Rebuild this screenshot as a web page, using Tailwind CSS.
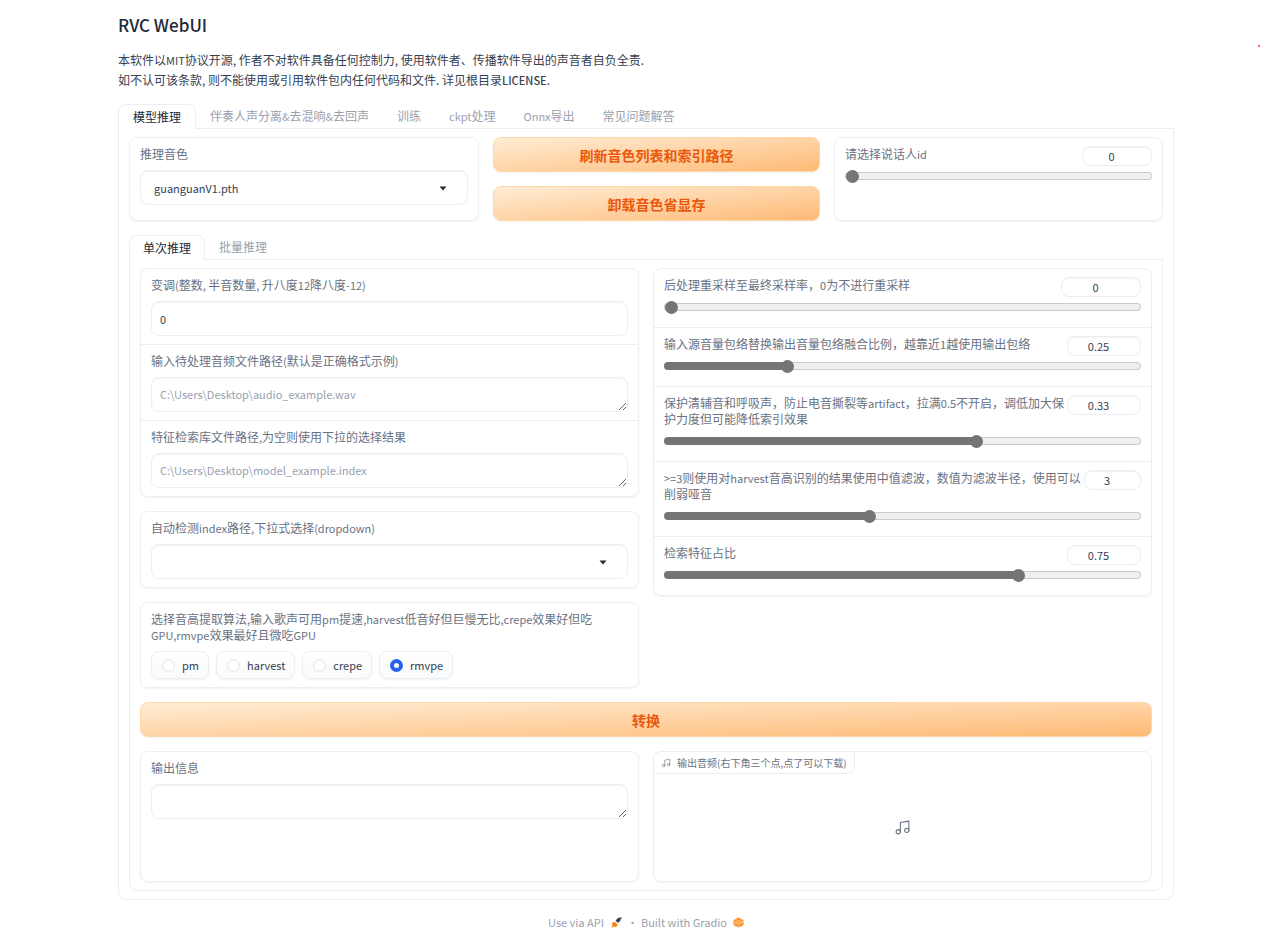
<!DOCTYPE html>
<html lang="zh-CN">

<head>
    <meta charset="UTF-8">
    <meta name="viewport" content="width=device-width, initial-scale=1.0">
    <script src="https://cdn.jsdelivr.net/npm/@tailwindcss/browser@4"></script>
    <title>RVC WebUI</title>
</head>

<body class="relative bg-white pl-[118px] pr-[106px] pt-[11px] font-['Noto_Sans_CJK_SC',sans-serif] text-xs leading-4 text-gray-700">
    <span class="absolute right-5 top-[45px] size-[2px] rounded-full bg-red-500"></span>

    <h1 class="text-[17px] font-medium leading-7 text-gray-800">RVC WebUI</h1>
    <p class="mt-[11px] leading-[19px]">
        本软件以<span class="text-[11px]">MIT</span>协议开源, 作者不对软件具备任何控制力, 使用软件者、传播软件导出的声音者自负全责.<br>
        如不认可该条款, 则不能使用或引用软件包内任何代码和文件. 详见根目录<b class="text-[11px] font-medium">LICENSE</b>.
    </p>

    <main class="mt-[14px]">
        <div class="flex border-b border-[#eceef1]" role="tablist">
            <button type="button" role="tab" aria-selected="true" class="-mb-px h-[25px] rounded-t-lg border border-b-0 border-[#eceef1] bg-white px-[14px] text-gray-800">模型推理</button>
            <button type="button" role="tab" class="h-6 px-[14px] text-gray-400">伴奏人声分离<span class="text-[11px]">&amp;</span>去混响<span class="text-[11px]">&amp;</span>去回声</button>
            <button type="button" role="tab" class="h-6 px-[14px] text-gray-400">训练</button>
            <button type="button" role="tab" class="h-6 px-[14px] text-gray-400"><span class="text-[11px]">ckpt</span>处理</button>
            <button type="button" role="tab" class="h-6 px-[14px] text-gray-400"><span class="text-[11px]">Onnx</span>导出</button>
            <button type="button" role="tab" class="h-6 px-[14px] text-gray-400">常见问题解答</button>
        </div>

        <div class="rounded-b-lg border border-t-0 border-[#eceef1] px-[10px] pb-2 pt-2">
            <!-- voice row -->
            <div class="grid grid-cols-[350fr_327fr_329fr] gap-[14px]">
                <div class="rounded-lg border border-[#eceef1] px-[10px] py-2 shadow-xs">
                    <label for="voice" class="mb-2 block text-gray-500">推理音色</label>
                    <div class="relative">
                        <select id="voice" class="block h-[35px] w-full appearance-none rounded-lg border border-[#eceef1] bg-white px-[13px] text-[11px] inset-shadow-xs">
                            <option>guanguanV1.pth</option>
                        </select>
                        <svg class="pointer-events-none absolute right-[21px] top-4 h-[5px] w-2" viewBox="0 0 8 5"><path d="M0.5 0.5h7L4 4.5z" fill="#1f2937" /></svg>
                    </div>
                </div>
                <div class="flex flex-col gap-[14px]">
                    <button type="button" class="h-[35px] rounded-lg border border-[#fed7aa] bg-linear-to-br from-[#ffedd5] to-[#fdba74] text-sm font-bold text-[#ea580c] shadow-xs">刷新音色列表和索引路径</button>
                    <button type="button" class="h-[35px] rounded-lg border border-[#fed7aa] bg-linear-to-br from-[#ffedd5] to-[#fdba74] text-sm font-bold text-[#ea580c] shadow-xs">卸载音色省显存</button>
                </div>
                <div class="rounded-lg border border-[#eceef1] px-[10px] py-2 shadow-xs">
                    <div class="flex items-start justify-between gap-[2px]">
                        <label for="speaker" class="mb-[6px] text-gray-500">请选择说话人<span class="text-[11px]">id</span></label>
                        <input type="number" aria-label="请选择说话人id" value="0" class="h-5 w-[70px] rounded-lg border border-[#eceef1] pl-3 pr-2 text-center text-[11px] inset-shadow-xs">
                    </div>
                    <input id="speaker" type="range" min="0" max="100" value="0" style="--fill:0%" class="my-1 block h-2 w-full appearance-none rounded-full border border-transparent [background:linear-gradient(to_right,#757575_var(--fill),#efefef_var(--fill))_padding-box,linear-gradient(to_right,#757575_var(--fill),#cbcbcb_var(--fill))_border-box] [&::-webkit-slider-thumb]:size-[13px] [&::-webkit-slider-thumb]:appearance-none [&::-webkit-slider-thumb]:rounded-full [&::-webkit-slider-thumb]:bg-[#757575]">
                </div>
            </div>

            <div class="mt-[14px] flex border-b border-[#eceef1]" role="tablist">
                <button type="button" role="tab" aria-selected="true" class="-mb-px h-[25px] rounded-t-lg border border-b-0 border-[#eceef1] bg-white px-[13px] text-gray-800">单次推理</button>
                <button type="button" role="tab" class="h-6 px-[14px] text-gray-400">批量推理</button>
            </div>

            <div class="rounded-b-lg border border-t-0 border-[#eceef1] px-[10px] pb-2 pt-2">
                <div class="grid grid-cols-2 items-start gap-[14px]">
                    <div class="flex flex-col gap-[14px]">
                        <div class="divide-y divide-[#eceef1] rounded-lg border border-[#eceef1] shadow-xs">
                            <div class="px-[10px] py-2">
                                <label for="pitch" class="mb-2 block text-gray-500">变调<span class="text-[11px]">(</span>整数<span class="text-[11px]">, </span>半音数量<span class="text-[11px]">, </span>升八度<span class="text-[11px]">12</span>降八度<span class="text-[11px]">-12)</span></label>
                                <input id="pitch" type="number" value="0" class="block h-[35px] w-full rounded-lg border border-[#eceef1] px-2 text-[11px] inset-shadow-xs">
                            </div>
                            <div class="px-[10px] py-2">
                                <label for="audio-path" class="mb-2 block text-gray-500">输入待处理音频文件路径<span class="text-[11px]">(</span>默认是正确格式示例<span class="text-[11px]">)</span></label>
                                <textarea id="audio-path" rows="1" placeholder="C:\Users\Desktop\audio_example.wav" class="block h-[35px] w-full resize-y rounded-lg border border-[#eceef1] px-2 py-2 text-[11px] leading-4 inset-shadow-xs placeholder:text-gray-400"></textarea>
                            </div>
                            <div class="px-[10px] py-2">
                                <label for="index-path" class="mb-2 block text-gray-500">特征检索库文件路径<span class="text-[11px]">,</span>为空则使用下拉的选择结果</label>
                                <textarea id="index-path" rows="1" placeholder="C:\Users\Desktop\model_example.index" class="block h-[35px] w-full resize-y rounded-lg border border-[#eceef1] px-2 py-2 text-[11px] leading-4 inset-shadow-xs placeholder:text-gray-400"></textarea>
                            </div>
                        </div>

                        <div class="rounded-lg border border-[#eceef1] px-[10px] py-2 shadow-xs">
                            <label for="index-select" class="mb-2 block text-gray-500">自动检测<span class="text-[11px]">index</span>路径<span class="text-[11px]">,</span>下拉式选择<span class="text-[11px]">(dropdown)</span></label>
                            <div class="relative">
                                <select id="index-select" class="block h-[35px] w-full appearance-none rounded-lg border border-[#eceef1] bg-white px-[13px] text-[11px] inset-shadow-xs">
                                    <option></option>
                                </select>
                                <svg class="pointer-events-none absolute right-[21px] top-4 h-[5px] w-2" viewBox="0 0 8 5"><path d="M0.5 0.5h7L4 4.5z" fill="#1f2937" /></svg>
                            </div>
                        </div>

                        <div role="radiogroup" aria-labelledby="f0-label" class="rounded-lg border border-[#eceef1] px-[10px] py-2 shadow-xs">
                            <div id="f0-label" class="mb-2 text-gray-500">选择音高提取算法<span class="text-[11px]">,</span>输入歌声可用<span class="text-[11px]">pm</span>提速<span class="text-[11px]">,harvest</span>低音好但巨慢无比<span class="text-[11px]">,crepe</span>效果好但吃<span class="text-[11px]">GPU,rmvpe</span>效果最好且微吃<span class="text-[11px]">GPU</span></div>
                            <div class="flex gap-[7px]">
                                <label class="flex h-7 items-center gap-[7px] rounded-lg border border-[#eceef1] bg-linear-to-t from-gray-50 to-white pl-[10px] pr-[9px] text-[11px] shadow-xs">
                                    <input type="radio" name="f0" class="size-[13px] appearance-none rounded-full border border-gray-200 bg-white inset-shadow-xs checked:border-4 checked:border-[#2563eb]">pm
                                </label>
                                <label class="flex h-7 items-center gap-[7px] rounded-lg border border-[#eceef1] bg-linear-to-t from-gray-50 to-white pl-[10px] pr-[9px] text-[11px] shadow-xs">
                                    <input type="radio" name="f0" class="size-[13px] appearance-none rounded-full border border-gray-200 bg-white inset-shadow-xs checked:border-4 checked:border-[#2563eb]">harvest
                                </label>
                                <label class="flex h-7 items-center gap-[7px] rounded-lg border border-[#eceef1] bg-linear-to-t from-gray-50 to-white pl-[10px] pr-[9px] text-[11px] shadow-xs">
                                    <input type="radio" name="f0" class="size-[13px] appearance-none rounded-full border border-gray-200 bg-white inset-shadow-xs checked:border-4 checked:border-[#2563eb]">crepe
                                </label>
                                <label class="flex h-7 items-center gap-[7px] rounded-lg border border-[#eceef1] bg-linear-to-t from-gray-50 to-white pl-[10px] pr-[9px] text-[11px] shadow-xs">
                                    <input type="radio" name="f0" checked class="size-[13px] appearance-none rounded-full border border-gray-200 bg-white inset-shadow-xs checked:border-4 checked:border-[#2563eb]">rmvpe
                                </label>
                            </div>
                        </div>
                    </div>

                    <!-- sliders -->
                    <div class="divide-y divide-[#eceef1] rounded-lg border border-[#eceef1] shadow-xs">
                        <div class="px-[10px] pb-3 pt-2">
                            <div class="flex items-start justify-between gap-[2px]">
                                <label for="resample" class="mb-[6px] text-gray-500">后处理重采样至最终采样率，<span class="text-[11px]">0</span>为不进行重采样</label>
                                <input type="number" aria-label="重采样" value="0" class="h-5 w-20 shrink-0 rounded-lg border border-[#eceef1] pl-3 pr-2 text-center text-[11px] inset-shadow-xs">
                            </div>
                            <input id="resample" type="range" min="0" max="48000" value="0" style="--fill:0%" class="my-1 block h-2 w-full appearance-none rounded-full border border-transparent [background:linear-gradient(to_right,#757575_var(--fill),#efefef_var(--fill))_padding-box,linear-gradient(to_right,#757575_var(--fill),#cbcbcb_var(--fill))_border-box] [&::-webkit-slider-thumb]:size-[13px] [&::-webkit-slider-thumb]:appearance-none [&::-webkit-slider-thumb]:rounded-full [&::-webkit-slider-thumb]:bg-[#757575]">
                        </div>
                        <div class="px-[10px] pb-3 pt-2">
                            <div class="flex items-start justify-between gap-[2px]">
                                <label for="rms" class="mb-[6px] text-gray-500">输入源音量包络替换输出音量包络融合比例，越靠近<span class="text-[11px]">1</span>越使用输出包络</label>
                                <input type="number" aria-label="融合比例" value="0.25" step="0.01" class="h-5 w-[74px] shrink-0 rounded-lg border border-[#eceef1] pl-3 pr-2 text-center text-[11px] inset-shadow-xs">
                            </div>
                            <input id="rms" type="range" min="0" max="1" step="0.01" value="0.25" style="--fill:25%" class="my-1 block h-2 w-full appearance-none rounded-full border border-transparent [background:linear-gradient(to_right,#757575_var(--fill),#efefef_var(--fill))_padding-box,linear-gradient(to_right,#757575_var(--fill),#cbcbcb_var(--fill))_border-box] [&::-webkit-slider-thumb]:size-[13px] [&::-webkit-slider-thumb]:appearance-none [&::-webkit-slider-thumb]:rounded-full [&::-webkit-slider-thumb]:bg-[#757575]">
                        </div>
                        <div class="px-[10px] pb-3 pt-2">
                            <div class="flex items-start justify-between gap-[2px]">
                                <label for="protect" class="mb-[6px] text-gray-500">保护清辅音和呼吸声，防止电音撕裂等<span class="text-[11px]">artifact</span>，拉满<span class="text-[11px]">0.5</span>不开启，调低加大保护力度但可能降低索引效果</label>
                                <input type="number" aria-label="保护" value="0.33" step="0.01" class="h-5 w-[74px] shrink-0 rounded-lg border border-[#eceef1] pl-3 pr-2 text-center text-[11px] inset-shadow-xs">
                            </div>
                            <input id="protect" type="range" min="0" max="0.5" step="0.01" value="0.33" style="--fill:66%" class="my-1 block h-2 w-full appearance-none rounded-full border border-transparent [background:linear-gradient(to_right,#757575_var(--fill),#efefef_var(--fill))_padding-box,linear-gradient(to_right,#757575_var(--fill),#cbcbcb_var(--fill))_border-box] [&::-webkit-slider-thumb]:size-[13px] [&::-webkit-slider-thumb]:appearance-none [&::-webkit-slider-thumb]:rounded-full [&::-webkit-slider-thumb]:bg-[#757575]">
                        </div>
                        <div class="px-[10px] pb-3 pt-2">
                            <div class="flex items-start justify-between gap-[2px]">
                                <label for="filter" class="mb-[6px] text-gray-500"><span class="text-[11px]">&gt;=3</span>则使用对<span class="text-[11px]">harvest</span>音高识别的结果使用中值滤波，数值为滤波半径，使用可以削弱哑音</label>
                                <input type="number" aria-label="滤波半径" value="3" class="h-5 w-[57px] shrink-0 rounded-lg border border-[#eceef1] pl-3 pr-2 text-center text-[11px] inset-shadow-xs">
                            </div>
                            <input id="filter" type="range" min="0" max="7" value="3" style="--fill:43%" class="my-1 block h-2 w-full appearance-none rounded-full border border-transparent [background:linear-gradient(to_right,#757575_var(--fill),#efefef_var(--fill))_padding-box,linear-gradient(to_right,#757575_var(--fill),#cbcbcb_var(--fill))_border-box] [&::-webkit-slider-thumb]:size-[13px] [&::-webkit-slider-thumb]:appearance-none [&::-webkit-slider-thumb]:rounded-full [&::-webkit-slider-thumb]:bg-[#757575]">
                        </div>
                        <div class="px-[10px] pb-3 pt-2">
                            <div class="flex items-start justify-between gap-[2px]">
                                <label for="index-rate" class="mb-[6px] text-gray-500">检索特征占比</label>
                                <input type="number" aria-label="检索特征占比" value="0.75" step="0.01" class="h-5 w-[74px] shrink-0 rounded-lg border border-[#eceef1] pl-3 pr-2 text-center text-[11px] inset-shadow-xs">
                            </div>
                            <input id="index-rate" type="range" min="0" max="1" step="0.01" value="0.75" style="--fill:75%" class="my-1 block h-2 w-full appearance-none rounded-full border border-transparent [background:linear-gradient(to_right,#757575_var(--fill),#efefef_var(--fill))_padding-box,linear-gradient(to_right,#757575_var(--fill),#cbcbcb_var(--fill))_border-box] [&::-webkit-slider-thumb]:size-[13px] [&::-webkit-slider-thumb]:appearance-none [&::-webkit-slider-thumb]:rounded-full [&::-webkit-slider-thumb]:bg-[#757575]">
                        </div>
                    </div>
                </div>

                <button type="button" class="mt-[14px] block h-[35px] w-full rounded-lg border border-[#fed7aa] bg-linear-to-br from-[#ffedd5] to-[#fdba74] text-sm font-bold text-[#ea580c] shadow-xs">转换</button>

                <!-- output -->
                <div class="mt-[14px] grid grid-cols-2 gap-[14px]">
                    <div class="rounded-lg border border-[#eceef1] px-[10px] py-2 shadow-xs">
                        <label for="info" class="mb-2 block text-gray-500">输出信息</label>
                        <textarea id="info" rows="1" class="block h-[35px] w-full resize-y rounded-lg border border-[#eceef1] px-2 py-2 text-[11px] leading-4 inset-shadow-xs"></textarea>
                    </div>
                    <div class="flex h-[131px] flex-col items-start rounded-lg border border-[#eceef1] shadow-xs">
                        <div class="flex h-[22px] items-center gap-[6px] rounded-br-lg border-b border-r border-[#eceef1] px-[7px] text-[10px] text-gray-500">
                            <svg class="size-[10px]" viewBox="0 0 24 24" fill="none" stroke="currentColor" stroke-width="1.5" stroke-linecap="round" stroke-linejoin="round"><path d="M9 18V5l12-2v13" /><circle cx="6" cy="18" r="3" /><circle cx="18" cy="16" r="3" /></svg>
                            输出音频(右下角三个点,点了可以下载)
                        </div>
                        <div class="flex w-full flex-1 items-center justify-center text-gray-500">
                            <svg class="size-[17px]" viewBox="0 0 24 24" fill="none" stroke="currentColor" stroke-width="1.5" stroke-linecap="round" stroke-linejoin="round"><path d="M9 18V5l12-2v13" /><circle cx="6" cy="18" r="3" /><circle cx="18" cy="16" r="3" /></svg>
                        </div>
                    </div>
                </div>
            </div>
        </div>
    </main>

    <footer class="flex items-center justify-center pb-3 pt-[14px] text-[11px] text-gray-400">
        <a href="#" class="flex items-center gap-[7px]">Use via API
            <svg class="size-[11px]" viewBox="0 0 22 22"><path d="M9 7l5-5 5-1 1 1-1 5-5 5z" fill="#334155" /><path d="M19 4l2-3" stroke="#334155" stroke-width="2" /><path d="M7 9l6 6-2 5-5-1-5 3 2-5-1-4z" fill="#ff7c00" /></svg>
        </a>
        <span class="ml-[5px] mr-[3px]">·</span>
        <a href="#" class="flex items-center gap-[6px]">Built with Gradio
            <svg class="size-[11px]" viewBox="0 0 22 22" fill="none"><path d="M11 1l10 5v10l-10 5-10-5V6z" fill="#ff8a1e" /><path d="M2 8l9 4 9-4M5 5l6 3 6-3M2 14l5-2 4 3 9-4M11 15v5" stroke="#ffe3c2" stroke-width="1.3" /></svg>
        </a>
    </footer>
</body>

</html>
